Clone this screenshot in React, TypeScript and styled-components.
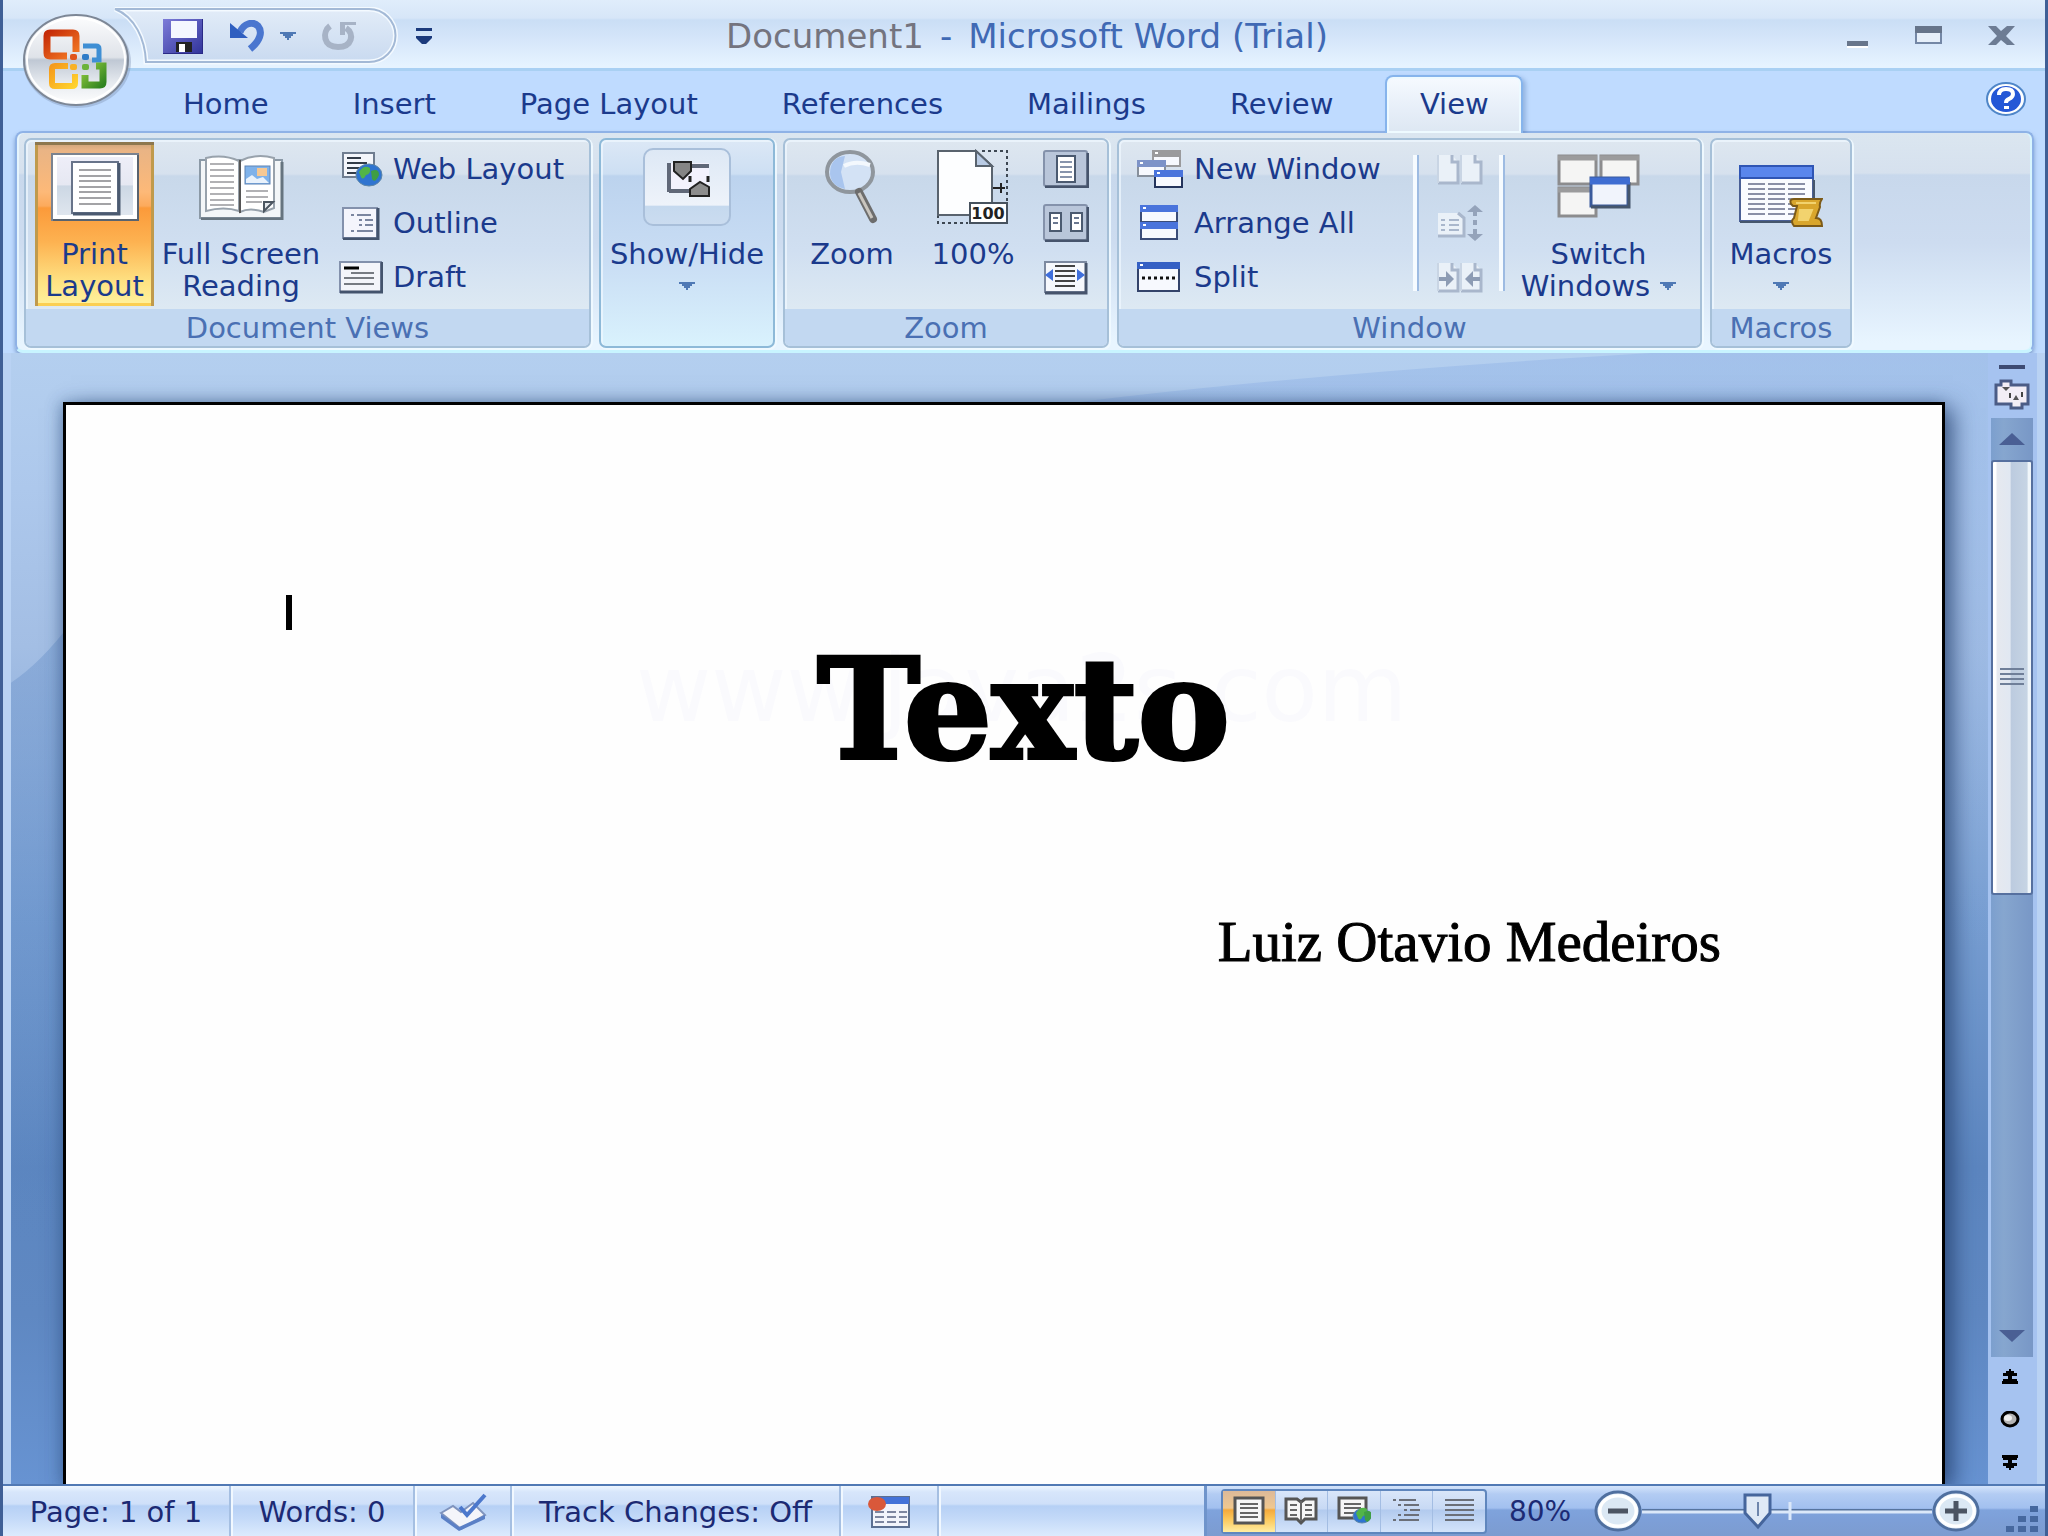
import React from "react";
import styled, { createGlobalStyle, css } from "styled-components";

const INK = "#1b3a8c";

const GlobalStyle = createGlobalStyle`
  * { box-sizing: border-box; }
  html, body { margin: 0; padding: 0; }
  body { background: #3c5a8c; }
  svg { display: block; flex: none; }
  button {
    border: 0; padding: 0; margin: 0; background: none;
    font: inherit; color: inherit; cursor: default;
  }
`;

const Window = styled.div`
  height: 100vh;
  display: flex;
  flex-direction: column;
  overflow: hidden;
  background: #bfdbff;
  border: solid #3f5f96;
  border-width: 0 3px;
  font: 29px/32px "DejaVu Sans", Verdana, sans-serif;
  color: ${INK};
`;

/* ---------- title bar ---------- */

const TitleBar = styled.header`
  position: relative;
  flex: none;
  height: 71px;
  display: grid;
  grid-template-columns: 1fr auto 1fr;
  align-items: center;
  padding: 4px 30px 0 36px;
  border-bottom: 3px solid #a9d0f3;
  background: linear-gradient(#e0edfb 0, #d7e6f8 18px, #cadef5 20px, #d6e6fa 40px, #e6f3ff 66px);
`;

const OfficeButton = styled.button`
  position: absolute;
  left: 14px;
  top: 12px;
  z-index: 2;
`;

const QuickAccess = styled.nav`
  position: relative;
  display: flex;
  align-items: center;
  height: 52px;
  margin-left: 106px;
  padding-left: 18px;
`;

const QuickShape = styled.svg`
  position: absolute;
  left: -34px;
  top: -3px;
`;

const QuickButton = styled.button<{ $gap?: number }>`
  position: relative;
  margin-right: ${(p) => p.$gap ?? 0}px;
`;

const Title = styled.h1`
  margin: 0;
  display: flex;
  gap: 16px;
  font-size: 34px;
  line-height: 40px;
  font-weight: 400;
  color: #4069b4;
  white-space: nowrap;
`;

const DocName = styled.span`
  color: #74747f;
`;

const WindowControls = styled.div`
  display: flex;
  align-items: center;
  justify-content: flex-end;
  gap: 46px;
`;

/* ---------- tabs ---------- */

const TabRow = styled.nav`
  flex: none;
  display: flex;
  align-items: flex-end;
  gap: 20px;
  height: 60px;
  padding: 0 19px 0 148px;
`;

const Tab = styled.button<{ $active?: boolean }>`
  height: 56px;
  padding: 0 30px;
  border: 2px solid transparent;
  border-bottom: 0;
  border-radius: 8px 8px 0 0;
  white-space: nowrap;
  ${(p) =>
    p.$active &&
    css`
      position: relative;
      z-index: 1;
      min-width: 138px;
      height: 58px;
      margin-bottom: -2px;
      padding-bottom: 2px;
      border-color: #86b4ec;
      background: linear-gradient(#f6faff, #e6eef8 60%, #dde7f2);
      box-shadow: inset 0 0 0 2px #eefaff, 3px 2px 4px rgba(70, 110, 170, 0.35);
      clip-path: inset(-6px -8px 0 -8px);
    `}
`;

const HelpButton = styled.button`
  margin: 0 0 14px auto;
`;

/* ---------- ribbon ---------- */

const Ribbon = styled.section`
  flex: none;
  position: relative;
  display: flex;
  gap: 8px;
  margin: 0 11px 0 12px;
  height: 222px;
  padding: 5px 7px;
  border: 2px solid #8fb2e6;
  border-bottom: 3px solid #c8f4ff;
  border-radius: 8px;
  background: linear-gradient(#dbe6f0 0, #d6e1ee 40px, #c8d8ec 42px, #cddcf0 110px, #e8f5ff 210px);
  box-shadow: inset -2px 0 0 #d8f6ff, inset 2px 0 0 #e6f5fd, 0 3px 4px rgba(80, 115, 170, 0.6);
`;

const Group = styled.section<{ $collapsed?: boolean }>`
  display: flex;
  flex-direction: column;
  height: 210px;
  border: 2px solid #a6c0d8;
  border-radius: 7px;
  background: linear-gradient(#dee7f0 0, #d6e1ee 34px, #c8d8ea 36px, #d0dff1 110px, #dde9f3 168px);
  box-shadow: 1px 1px 0 1px rgba(240, 250, 255, 0.9), inset 1px 1px 0 1px rgba(240, 248, 255, 0.7);
  ${(p) =>
    p.$collapsed &&
    css`
      border-color: #8db9d8;
      background: linear-gradient(#dce8f6 0, #cddff3 34px, #bcd3ee 36px, #c9ddf4 120px, #d9f2fd 206px);
    `}
`;

const GroupBody = styled.div<{ $left?: number; $right?: number }>`
  flex: 1;
  display: flex;
  padding: 2px ${(p) => p.$right ?? 0}px 0 ${(p) => p.$left ?? 0}px;
`;

const GroupLabel = styled.h2`
  margin: 0;
  height: 37px;
  padding-top: 3px;
  border-radius: 0 0 5px 5px;
  background: #c2d8f1;
  font-size: 29px;
  line-height: 32px;
  font-weight: 400;
  text-align: center;
  color: #4a70b3;
`;

const BigButton = styled.button<{ $width: number; $active?: boolean }>`
  width: ${(p) => p.$width}px;
  height: 164px;
  display: flex;
  flex-direction: column;
  align-items: center;
  white-space: nowrap;
  ${(p) =>
    p.$active &&
    css`
      background: linear-gradient(#c8a077 0, #e9b485 8px, #fdb978 50px, #fcaa5c 64px, #fb9a3a 66px, #fdb251 100px, #fee283 140px, #fff09a 160px);
      box-shadow: inset 0 3px 0 #8d774e, inset 3px 0 0 #c09a4c, inset -3px 0 0 #c09a4c, inset 0 -3px 0 #fbcf52;
    `}
`;

const IconSlot = styled.span`
  display: flex;
  align-items: center;
  justify-content: center;
  height: 90px;
  margin-bottom: 6px;
`;

const LabelLine = styled.span`
  display: flex;
  align-items: center;
  justify-content: center;
  gap: 10px;
  height: 32px;
`;

const SmallColumn = styled.div<{ $width: number; $indent?: number }>`
  width: ${(p) => p.$width}px;
  padding-left: ${(p) => p.$indent ?? 0}px;
  display: flex;
  flex-direction: column;
`;

const SmallButton = styled.button`
  height: 54px;
  display: flex;
  align-items: center;
  gap: 10px;
  white-space: nowrap;
`;

const Divider = styled.span`
  width: 6px;
  height: 136px;
  margin-top: 13px;
  background: linear-gradient(90deg, #f6fbff 66%, #9dbbe2 66%);
`;

/* ---------- document area ---------- */

const Workspace = styled.div`
  flex: 1;
  min-height: 0;
  position: relative;
  display: flex;
  overflow: hidden;
  border: solid #b9d2f3;
  border-width: 0 8px;
  background: linear-gradient(#b4cfef 0, #adc8ec 12%, #a3bee4 26%, #779ed2 50%, #5c86c0 72%, #5f88c2 85%, #6793d2 100%);
`;

const Backdrop = styled.svg`
  position: absolute;
  inset: 0;
`;

const Page = styled.main`
  position: relative;
  flex: 1;
  margin: 49px 43px 0 52px;
  padding: 190px 221px 0 220px;
  border: 3px solid #000;
  border-bottom: 0;
  background: #fefefe;
  box-shadow: 8px 6px 22px rgba(30, 55, 100, 0.75), -4px 0 12px rgba(60, 100, 150, 0.35);
  color: #000;
`;

const Caret = styled.div`
  width: 6px;
  height: 35px;
  background: #000;
`;

const Watermark = styled.span`
  position: absolute;
  left: 570px;
  top: 235px;
  font-size: 92px;
  line-height: 100px;
  color: #fafafd;
`;

const Heading = styled.h2`
  position: relative;
  margin: 14px 0 0;
  padding-left: 40px;
  font: 700 138px/132px "DejaVu Serif", "Liberation Serif", serif;
  text-align: center;
  -webkit-text-stroke: 4px #000;
`;

const Author = styled.p`
  margin: 136px 0 0;
  font: 57px/60px "Liberation Serif", "Times New Roman", serif;
  text-align: right;
  -webkit-text-stroke: 1px #000;
`;

const ScrollColumn = styled.aside`
  position: relative;
  flex: none;
  width: 49px;
  display: flex;
  flex-direction: column;
  align-items: center;
  padding: 12px 4px 0 3px;
  background: #a6c3f0;
`;

const SplitHandle = styled.button`
  width: 26px;
  height: 4px;
  background: #3d4b73;
`;

const RulerButton = styled.button`
  margin: 10px 0 8px;
`;

const Track = styled.div`
  flex: 1;
  width: 42px;
  display: flex;
  flex-direction: column;
  background: linear-gradient(90deg, #7c9fce, #86a6cf 30%, #7897c6);
`;

const TrackSpace = styled.div`
  flex: 1;
`;

const ArrowButton = styled.button`
  height: 42px;
  display: flex;
  align-items: center;
  justify-content: center;
`;

const Thumb = styled.div`
  height: 435px;
  display: flex;
  align-items: center;
  justify-content: center;
  border: 2px solid #56709f;
  border-radius: 3px;
  background: linear-gradient(90deg, #fff 0 3px, #e6e9ef 4px, #e1e8f2 45%, #bccbdf 48%, #c6d4e4 90%, #f0f6fa 92%);
`;

const BrowseButtons = styled.div`
  height: 127px;
  display: flex;
  flex-direction: column;
  align-items: center;
  gap: 26px;
  padding: 12px 4px 0 0;
`;

/* ---------- status bar ---------- */

const StatusBar = styled.footer`
  flex: none;
  height: 52px;
  display: flex;
  border-top: 2px solid #5179b4;
  color: #1c2a74;
`;

const StatusLeft = styled.div`
  flex: 1;
  display: flex;
  background: linear-gradient(#eef6ff 0, #d7e6fb 6px, #cfe0f9 18px, #b6d0f5 20px, #c3d9f8 32px, #dcebfd 50px);
`;

const StatusCell = styled.button<{ $width?: number }>`
  width: ${(p) => p.$width}px;
  display: flex;
  align-items: center;
  justify-content: center;
  padding-top: 2px;
  white-space: nowrap;
  border-right: 2px solid #a5bfe2;
  box-shadow: 2px 0 0 #f1f8ff;
`;

const StatusRight = styled.div`
  display: flex;
  align-items: center;
  width: 841px;
  padding-left: 14px;
  border-left: 3px solid #6f94cb;
  background: linear-gradient(#d4e4fb 0, #b3ccf3 8px, #a2c0ef 22px, #7fa3dc 24px, #7d9fd8 34px, #7c9cd0 50px);
`;

const ViewSwitch = styled.div`
  display: flex;
  width: 266px;
  height: 45px;
  border: 2px solid #5f86bd;
  border-radius: 4px;
  background: linear-gradient(#d9e6f9 0, #c7d9f4 18px, #b2caee 19px, #d5e5fb 42px);
`;

const ViewButton = styled.button<{ $active?: boolean }>`
  flex: 1;
  display: flex;
  align-items: center;
  justify-content: center;
  border-right: 1px solid #a3bde3;
  &:last-child { border-right: 0; }
  ${(p) =>
    p.$active &&
    css`
      background: linear-gradient(#dcb998 0, #f0c890 17px, #f3a93c 19px, #fbc75a 28px, #fff0a8 42px);
    `}
`;

const ZoomValue = styled.button`
  width: 64px;
  margin: 0 22px 0 21px;
  padding-top: 2px;
  font-size: 28px;
`;

const ZoomSlider = styled.label`
  position: relative;
  flex: none;
`;

const Range = styled.input`
  position: absolute;
  inset: 0;
  width: 100%;
  height: 100%;
  margin: 0;
  opacity: 0;
`;

const Grip = styled.svg`
  margin-left: 26px;
  align-self: flex-end;
`;

/* ---------- drawings ---------- */

const DownArrow = ({ color = "#4f79b5" }: { color?: string }) => (
  <svg width="16" height="9" viewBox="0 0 16 9">
    <path d="M0 0h16v2h-3v2h-2v2H9v2H7V6H5V4H3V2H0z" fill={color} />
  </svg>
);

const OfficeLogo = () => (
  <svg width="118" height="98" viewBox="0 0 118 98">
    <defs>
      <linearGradient id="orb" x1="0" y1="0" x2="0" y2="1">
        <stop offset="0" stopColor="#fdfdfe" />
        <stop offset="0.47" stopColor="#dfe3e9" />
        <stop offset="0.5" stopColor="#bfc8d4" />
        <stop offset="0.75" stopColor="#e6eaef" />
        <stop offset="1" stopColor="#ffffff" />
      </linearGradient>
      <linearGradient id="lr" x1="0" y1="0" x2="1" y2="1"><stop offset="0" stopColor="#c52b08" /><stop offset="1" stopColor="#f47a24" /></linearGradient>
      <linearGradient id="ly" x1="0" y1="0" x2="1" y2="1"><stop offset="0" stopColor="#f59a1c" /><stop offset="1" stopColor="#ffd22e" /></linearGradient>
      <linearGradient id="lg" x1="0" y1="0" x2="1" y2="1"><stop offset="0" stopColor="#8cc63c" /><stop offset="1" stopColor="#2f8420" /></linearGradient>
    </defs>
    <ellipse cx="60" cy="50" rx="54" ry="46" fill="#7f93b5" opacity="0.4" />
    <ellipse cx="59" cy="48" rx="52" ry="45" fill="url(#orb)" stroke="#7d8796" strokeWidth="2" />
    <ellipse cx="59" cy="48" rx="49" ry="42" fill="none" stroke="#fff" strokeWidth="2" />
    <path d="M50 44H33q-3 0-3-3V24q0-3 3-3h23q3 0 3 3v16" fill="none" stroke="url(#lr)" strokeWidth="7" />
    <path d="M66 34h13q3 0 3 3v11h-7" fill="none" stroke="#3f8fd4" strokeWidth="5" />
    <path d="M51 54H38q-3 0-3 3v14q0 3 3 3h17q3 0 3-3V62" fill="none" stroke="url(#ly)" strokeWidth="6" />
    <path d="M79 54h7v16q0 3-3 3H68V63" fill="none" stroke="url(#lg)" strokeWidth="7" />
    <rect x="53" y="42" width="7" height="6" rx="2" fill="#e0561c" />
    <rect x="65" y="42" width="7" height="6" rx="2" fill="#2f7cc8" />
    <rect x="53" y="52" width="7" height="6" rx="2" fill="#f8b124" />
    <rect x="65" y="52" width="7" height="6" rx="2" fill="#6cb33a" />
  </svg>
);

const SaveIcon = () => (
  <svg width="40" height="35" viewBox="0 0 40 35">
    <defs><linearGradient id="sv" x1="0" x2="1" y2="1"><stop offset="0" stopColor="#7d7cd8" /><stop offset="1" stopColor="#30339a" /></linearGradient></defs>
    <rect width="40" height="35" fill="url(#sv)" />
    <rect x="8" y="2" width="26" height="17" fill="#f4f7ff" />
    <rect x="13" y="23" width="16" height="10" fill="#222" />
    <rect x="16" y="25" width="6" height="8" fill="#fff" />
    <path d="M0 35h40V0" fill="none" stroke="#2a2a86" strokeWidth="2" />
  </svg>
);

const UndoIcon = () => (
  <svg width="36" height="32" viewBox="0 0 36 32">
    <path d="M11 12C15 3 24 1 29 6c5 6 2 15-8 23" fill="none" stroke="#4a76cf" strokeWidth="7" />
    <path d="M1 3v15h18z" fill="#2f5fc0" />
  </svg>
);

const RedoIcon = () => (
  <svg width="38" height="32" viewBox="0 0 38 32">
    <path d="M10 6C2 12 3 27 18 27c14 0 17-13 8-19" fill="none" stroke="#a7b3c6" strokeWidth="6" />
    <path d="M20 2h16v3H25v10h-5z" fill="#a7b3c6" />
  </svg>
);

const PrintLayoutIcon = () => (
  <svg width="88" height="68" viewBox="0 0 88 68">
    <defs><linearGradient id="pl" x1="0" x2="0" y1="0" y2="1"><stop offset="0" stopColor="#eeeef8" /><stop offset="0.48" stopColor="#e6e8f2" /><stop offset="0.5" stopColor="#ccd7e4" /><stop offset="1" stopColor="#dfe6ee" /></linearGradient></defs>
    <rect x="1" y="1" width="86" height="66" fill="#fff" stroke="#7b8390" strokeWidth="2" />
    <rect x="6" y="4" width="76" height="58" fill="url(#pl)" />
    <path d="M2 67h85V2" fill="none" stroke="#59636f" strokeWidth="2" />
    <rect x="21" y="9" width="46" height="51" fill="#fff" stroke="#68748a" strokeWidth="2" />
    <path d="M22 61h46V10" fill="none" stroke="#4b5a70" strokeWidth="3" />
    <path d="M28 17h32M28 23h32M28 28h32M28 34h32M28 39h32M28 45h32M28 51h32" stroke="#a3a3a6" strokeWidth="2" />
  </svg>
);

const ReadingIcon = () => (
  <svg width="86" height="66" viewBox="0 0 86 66">
    <rect x="2" y="6" width="82" height="58" fill="#f3f6f8" stroke="#8b99a6" strokeWidth="2" />
    <path d="M3 65h81V8" fill="none" stroke="#66747f" strokeWidth="3" />
    <path d="M8 4q18-4 33 3v50q-15-5-33 0z" fill="#fff" stroke="#98a2ac" strokeWidth="2" />
    <path d="M42 7q16-8 34-3v50l-10 4q-14-5-24 0z" fill="#fff" stroke="#98a2ac" strokeWidth="2" />
    <path d="M42 6v53" stroke="#555" strokeWidth="2" />
    <path d="M12 10h24M12 16h24M12 22h24M12 28h24M12 34h24M12 40h24M12 46h24M12 51h24M48 37h22M48 43h22M48 48h16" stroke="#b1b1b4" strokeWidth="2" />
    <rect x="47" y="12" width="25" height="18" fill="#7fb2ea" stroke="#5f83b4" />
    <rect x="59" y="14" width="10" height="8" fill="#f6c893" />
    <path d="M48 29v-4l6-4 5 4 6-2 6 6z" fill="#e9f2fc" />
    <path d="M66 57v-9h9z" fill="#e6eaee" stroke="#4c5660" strokeWidth="2" />
  </svg>
);

const Globe = ({ x, y, r }: { x: number; y: number; r: number }) => (
  <g>
    <ellipse cx={x} cy={y} rx={r} ry={r - 2} fill="#2f74d0" stroke="#5d86a8" />
    <path d={`M${x - r + 3} ${y - 3}q5 -8 11 -4q1 6 -4 7q-3 6 -5 2z`} fill="#52b548" />
    <path d={`M${x + 2} ${y - 4}q8 -3 8 4q-4 9 -7 4z`} fill="#3f9e44" />
  </g>
);

const WebIcon = () => (
  <svg width="44" height="36" viewBox="0 0 44 36">
    <rect x="4" y="2" width="31" height="24" fill="#f4f6fb" stroke="#6f7d90" strokeWidth="2" />
    <path d="M8 7h14M8 12h20M8 17h14M8 22h10" stroke="#333c48" strokeWidth="2" />
    <Globe x={30} y={24} r={13} />
  </svg>
);
const OutlineIcon = () => (
  <svg width="44" height="34" viewBox="0 0 44 34">
    <rect x="4" y="2" width="34" height="30" fill="#f4f5fc" stroke="#8391ac" strokeWidth="2" />
    <path d="M4 33h35V2" fill="none" stroke="#43536c" strokeWidth="3" />
    <path d="M12 9h3M18 9h14M20 14h3M26 14h8M20 19h3M26 19h8M12 25h3M18 25h16" stroke="#7b86a0" strokeWidth="2" />
  </svg>
);
const DraftIcon = () => (
  <svg width="44" height="34" viewBox="0 0 44 34">
    <rect x="1" y="2" width="41" height="30" fill="#f4f5fa" stroke="#8391ac" strokeWidth="2" />
    <path d="M1 32h42V2" fill="none" stroke="#43536c" strokeWidth="3" />
    <path d="M5 8h15" stroke="#000" strokeWidth="3" />
    <path d="M12 13h23M5 18h30M5 24h30" stroke="#777b82" strokeWidth="2" />
  </svg>
);

const ShowHideIcon = () => (
  <svg width="98" height="78" viewBox="0 0 98 78">
    <defs><linearGradient id="sh" x1="0" x2="0" y1="0" y2="1"><stop offset="0" stopColor="#dde8f5" /><stop offset="0.74" stopColor="#eef3fa" /><stop offset="0.75" stopColor="#c5d9ee" /><stop offset="1" stopColor="#cbdcf0" /></linearGradient></defs>
    <rect x="6" y="1" width="86" height="76" rx="9" fill="url(#sh)" stroke="#a9bfda" strokeWidth="2" />
    <path d="M30 15h41v28H30z" fill="#f3f2fd" />
    <path d="M31 44V15M31 43h20M53 18h18" fill="none" stroke="#606878" strokeWidth="4" />
    <path d="M36 14h17v9l-8 8-9-8z" fill="#858585" stroke="#222" strokeWidth="2" />
    <path d="M52 48h19V39l-9-5-10 7z" fill="#8d8d8d" stroke="#222" strokeWidth="2" />
    <path d="M52 28v6M70 28v6" stroke="#222" strokeWidth="3" />
  </svg>
);

const MagnifierIcon = () => (
  <svg width="56" height="76" viewBox="0 0 56 76">
    <ellipse cx="26" cy="23" rx="23" ry="20" fill="#d3e2f5" stroke="#8f969d" strokeWidth="4" />
    <path d="M6 25Q6 8 21 7l-4 16 4 17Q7 37 6 25z" fill="#a9c5ee" />
    <path d="M20 17q11-6 26-1" stroke="#f3f8fd" strokeWidth="4" fill="none" />
    <path d="M35 43l14 27" stroke="#6d6d6d" strokeWidth="8" strokeLinecap="round" />
    <path d="M35 44l13 25" stroke="#c9c5be" strokeWidth="3" />
  </svg>
);

const HundredIcon = () => (
  <svg width="74" height="76" viewBox="0 0 74 76">
    <path d="M46 2h25v52M2 66v8h30" fill="none" stroke="#3d4752" strokeWidth="2" strokeDasharray="3 3" />
    <path d="M2 2h38l16 15v49H2z" fill="#fdfeff" stroke="#59636e" strokeWidth="2" />
    <path d="M40 2v15h16z" fill="#b9cbe4" stroke="#59636e" strokeWidth="2" />
    <path d="M57 39h12M65 34v10" stroke="#222" strokeWidth="2" />
    <rect x="34" y="54" width="37" height="20" fill="#fff" stroke="#47525e" strokeWidth="2" />
    <text x="52" y="70" textAnchor="middle" fontFamily="DejaVu Sans" fontWeight="700" fontSize="16" fill="#222">100</text>
  </svg>
);

const PageFrame = ({ children }: { children: React.ReactNode }) => (
  <svg width="46" height="38" viewBox="0 0 46 38">
    <rect x="1" y="1" width="43" height="35" rx="2" fill="#b9c6da" stroke="#8492ab" strokeWidth="2" />
    <path d="M2 37h43V3" fill="none" stroke="#46546c" strokeWidth="3" />
    {children}
  </svg>
);

const PageWidthIcon = () => (
  <svg width="46" height="38" viewBox="0 0 46 38">
    <rect x="2" y="4" width="41" height="30" fill="#f6f8fc" stroke="#7c89a0" strokeWidth="2" />
    <path d="M2 35h41V5" fill="none" stroke="#46546c" strokeWidth="3" />
    <path d="M12 8h20M12 13h20M12 18h20M12 23h20M12 28h20" stroke="#444" strokeWidth="2" />
    <path d="M2 17l8-6v12zM42 17l-8-6v12z" fill="#3f6fdc" />
  </svg>
);

const MiniWindow = ({ x, y, w, h, bar, edge }: { x: number; y: number; w: number; h: number; bar: string; edge: string }) => (
  <g>
    <rect x={x + 1} y={y + 1} width={w - 2} height={h - 2} fill="#f7f9fe" stroke={edge} strokeWidth="2" />
    <rect x={x} y={y} width={w} height="7" fill={bar} />
    <rect x={x + 3} y={y + 2} width="3" height="2" fill="#fff" />
  </g>
);

const BLUE = "#4a74dc";

const NewWindowIcon = () => (
  <svg width="47" height="40" viewBox="0 0 47 40">
    <MiniWindow x={15} y={1} w={29} h={17} bar="#9a9a9c" edge="#9a9a9c" />
    <MiniWindow x={0} y={11} w={29} h={17} bar="#7d93c8" edge="#87909c" />
    <MiniWindow x={17} y={21} w={29} h={18} bar={BLUE} edge="#24345c" />
  </svg>
);
const ArrangeIcon = () => (
  <svg width="47" height="36" viewBox="0 0 47 36">
    <MiniWindow x={3} y={0} w={38} h={18} bar={BLUE} edge="#3a4c78" />
    <MiniWindow x={3} y={17} w={38} h={18} bar={BLUE} edge="#3a4c78" />
  </svg>
);
const SplitIcon = () => (
  <svg width="47" height="32" viewBox="0 0 47 32">
    <MiniWindow x={0} y={1} w={43} h={30} bar="#3560c4" edge="#33436a" />
    <path d="M5 17h34" stroke="#111" strokeWidth="3" strokeDasharray="3 3" />
  </svg>
);

const GHOST = "#a9b7cc";
const TwoPages = ({ arrows }: { arrows?: boolean }) => (
  <svg width="46" height="31" viewBox="0 0 46 31">
    {[1, 24].map((x) => (
      <g key={x}>
        <path d={`M${x} 1h14l6 7v21H${x}z`} fill="#eaf1f8" />
        <path d={`M${x} 29h20V8h-6V1`} fill="none" stroke={GHOST} strokeWidth="3" />
        <path d={`M${x} 1v28`} stroke="#c9d5e4" strokeWidth="2" />
      </g>
    ))}
    {arrows && (
      <g fill="#8d9cb4">
        <path d="M2 15h7V9l8 8-8 8v-6H2z" />
        <path d="M43 15h-7V9l-8 8 8 8v-6h7z" />
      </g>
    )}
  </svg>
);
const SyncScroll = () => (
  <svg width="46" height="38" viewBox="0 0 46 38">
    <path d="M1 9h20l6 6v17H1z" fill="#eaf1f8" />
    <path d="M1 32h26V14l-6-5" fill="none" stroke={GHOST} strokeWidth="3" />
    <path d="M4 16h4M12 16h10M4 21h4M12 21h10M4 26h4M12 26h10" stroke={GHOST} strokeWidth="2" />
    <path d="M30 8l8-7 8 7zM30 30l8 7 8-7zM36 8h4v4h-4zM36 16h4v5h-4zM36 25h4v5h-4z" fill="#94a3ba" />
  </svg>
);

const SwitchIcon = () => (
  <svg width="84" height="66" viewBox="0 0 84 66">
    {[[1, 1], [43, 1], [1, 33]].map(([x, y]) => (
      <g key={`${x}-${y}`}>
        <rect x={x + 1} y={y + 1} width="37" height="28" fill="#f5f5f4" stroke="#8c8c8e" strokeWidth="3" />
        <path d={`M${x} ${y + 3}h39`} stroke="#9b9b9c" strokeWidth="5" />
      </g>
    ))}
    <rect x="34" y="24" width="37" height="28" fill="#f1f4fc" stroke="#3a5a9c" strokeWidth="3" />
    <path d="M34 53h38V28" fill="none" stroke="#46566c" strokeWidth="3" />
    <path d="M33 27h40" stroke="#3f6dd2" strokeWidth="7" />
  </svg>
);

const MacrosIcon = () => (
  <svg width="84" height="86" viewBox="0 0 84 86">
    <rect x="1" y="23" width="73" height="54" fill="#fafbff" stroke="#4a5f95" strokeWidth="2" />
    <rect x="1" y="22" width="73" height="12" fill="#5a86ec" stroke="#2f55b4" strokeWidth="2" />
    <path d="M1 78h74V36" fill="none" stroke="#46566c" strokeWidth="2" />
    {[40, 45, 50, 55, 60, 65, 70].map((y) => (
      <path key={y} d={`M9 ${y}h17M29 ${y}h17M49 ${y}h17`} stroke="#8a8fa6" strokeWidth="2" />
    ))}
    <path d="M52 60q-2-5 3-5h28q-3 4-2 8l-4 11q6 0 6 8H55q-4-5 0-8l3-12h-4z" fill="#d9a62c" stroke="#7c5a17" strokeWidth="2" />
    <path d="M57 59h20M61 66h12l-4 10H60z" fill="#f2d36e" stroke="#f2d36e" strokeWidth="2" />
  </svg>
);

const RulerIcon = () => (
  <svg width="36" height="31" viewBox="0 0 36 31">
    <path d="M2 6h5V2h10v4h17v19h-6v4H17v-4H2z" fill="#f3eef6" stroke="#4b5c86" strokeWidth="3" />
    <path d="M8 8h8l-4 4zM19 21h6l-3-5z" fill="#555" />
    <path d="M16 14v5M28 13v5" stroke="#444" strokeWidth="2" />
  </svg>
);

const PageJump = ({ down }: { down?: boolean }) => (
  <svg width="16" height="16" viewBox="0 0 16 16">
    <g transform={down ? "rotate(180 8 8)" : undefined}>
      <path d="M7 0h2v2h3v2h3v3h-5v3h5v2h1v3H0v-3h1v-2h5V7H1V4h3V2h3z" fill="#000" />
    </g>
  </svg>
);

const ProofIcon = () => (
  <svg width="48" height="38" viewBox="0 0 48 38">
    <path d="M2 20l12-7 8 6 12-9 12 12-24 14z" fill="#f4f5fa" stroke="#7f93bd" strokeWidth="2" />
    <path d="M2 21l18 13 26-12v4L20 38 2 25z" fill="#5b80c6" />
    <path d="M21 14l7 8L46 2" fill="none" stroke="#4c78cc" strokeWidth="4" />
  </svg>
);

const MacroStatusIcon = () => (
  <svg width="44" height="34" viewBox="0 0 44 34">
    <rect x="5" y="2" width="37" height="30" fill="#f2f4fb" stroke="#5b6f92" strokeWidth="2" />
    <rect x="6" y="2" width="36" height="7" fill="#4472d8" />
    <path d="M8 17h9M20 17h9M32 17h8M8 22h9M20 22h9M32 22h8M8 27h9M20 27h9M32 27h8" stroke="#7d86a0" strokeWidth="2" />
    <ellipse cx="10" cy="9" rx="9" ry="7" fill="#d9583a" />
  </svg>
);

const ViewIcon = ({ kind }: { kind: number }) => (
  <svg width="34" height="30" viewBox="0 0 34 30">
    {kind === 0 && (<g><rect x="3" y="2" width="28" height="25" fill="#f6f6f6" stroke="#555" strokeWidth="3" /><path d="M8 8h18M8 12h18M8 17h18M8 21h18" stroke="#666" strokeWidth="2" /></g>)}
    {kind === 1 && (<g><path d="M2 3h11l4 3 4-3h11v20H21l-4 4-4-4H2z" fill="#f6f6f6" stroke="#555" strokeWidth="3" /><path d="M17 5v20M6 9h7M6 14h7M6 19h7M21 9h7M21 14h7M21 19h7" stroke="#666" strokeWidth="2" /></g>)}
    {kind === 2 && (<g><rect x="2" y="2" width="27" height="20" fill="#f6f6f6" stroke="#555" strokeWidth="3" /><path d="M7 8h17M7 12h17M7 17h17" stroke="#666" strokeWidth="2" /><Globe x={25} y={20} r={9} /></g>)}
    {kind === 3 && (<path d="M3 4h3M9 4h17M8 9h3M14 9h15M14 14h3M20 14h10M8 19h3M14 19h15M3 24h3M9 24h20" stroke="#6b6f78" strokeWidth="2" />)}
    {kind === 4 && (<path d="M3 4h29M3 9h29M3 14h29M3 19h29M3 24h29" stroke="#6b6f78" strokeWidth="2" />)}
  </svg>
);

const RoundButton = ({ plus }: { plus?: boolean }) => (
  <svg width="48" height="42" viewBox="0 0 48 42">
    <ellipse cx="24" cy="21" rx="22" ry="19" fill="#f0f6fc" stroke="#4f6f9f" strokeWidth="3" />
    <ellipse cx="24" cy="21" rx="18" ry="15" fill="#dbe8f4" stroke="#fff" strokeWidth="3" />
    <path d={plus ? "M13 21h22M24 11v20" : "M14 21h20"} stroke="#4c5563" strokeWidth="5" />
  </svg>
);

/* ---------- screen ---------- */

const viewNames = ["Print Layout", "Full Screen Reading", "Web Layout", "Outline", "Draft"];
const tabs = ["Home", "Insert", "Page Layout", "References", "Mailings", "Review", "View"];

export default function App() {
  return (
    <>
      <GlobalStyle />
      <Window>
        <TitleBar>
          <OfficeButton aria-label="Office Button"><OfficeLogo /></OfficeButton>
          <QuickAccess aria-label="Quick Access Toolbar">
            <QuickShape width="290" height="58" viewBox="0 0 290 58">
              <defs><linearGradient id="qa" x1="0" x2="0" y1="0" y2="1"><stop offset="0" stopColor="#e2ecf8" /><stop offset="1" stopColor="#c9daf0" /></linearGradient></defs>
              <path d="M4 2H258a26 26 0 0 1 0 53H35C34 32 24 10 4 2z" fill="url(#qa)" stroke="#f4faff" strokeWidth="5" />
              <path d="M4 2H258a26 26 0 0 1 0 53H35C34 32 24 10 4 2z" fill="none" stroke="#a3b9d6" strokeWidth="2" />
            </QuickShape>
            <QuickButton aria-label="Save" $gap={26}><SaveIcon /></QuickButton>
            <QuickButton aria-label="Undo" $gap={15}><UndoIcon /></QuickButton>
            <QuickButton aria-label="Undo history" $gap={24}><DownArrow /></QuickButton>
            <QuickButton aria-label="Repeat" $gap={58}><RedoIcon /></QuickButton>
            <QuickButton aria-label="Customize Quick Access Toolbar">
              <svg width="16" height="16" viewBox="0 0 16 16"><path d="M0 0h16v3H0zM0 8h16v2l-6 6H6L0 10z" fill="#1b3a7c" /></svg>
            </QuickButton>
          </QuickAccess>
          <Title><DocName>Document1</DocName><span>-</span><span>Microsoft Word (Trial)</span></Title>
          <WindowControls>
            <button aria-label="Minimize"><svg width="22" height="26" viewBox="0 0 22 26"><path d="M0 18h21v5H0z" fill="#68768c" /><path d="M0 23h21v2H0z" fill="#fff" /></svg></button>
            <button aria-label="Restore"><svg width="27" height="20" viewBox="0 0 27 20"><path d="M1 1h25v16H1z" fill="#e6effa" stroke="#7487a6" strokeWidth="2" /><path d="M0 0h27v7H0z" fill="#66748a" /></svg></button>
            <button aria-label="Close"><svg width="27" height="22" viewBox="0 0 27 22"><path d="M0 1h8l5 5 6-5h8l-9 10 9 9h-8l-6-5-5 5H0l9-9z" fill="#6d7c94" /></svg></button>
          </WindowControls>
        </TitleBar>

        <TabRow>
          {tabs.map((t) => <Tab key={t} $active={t === "View"}>{t}</Tab>)}
          <HelpButton aria-label="Help">
            <svg width="40" height="35" viewBox="0 0 40 35">
              <ellipse cx="20" cy="17" rx="19" ry="16" fill="#fff" stroke="#4f86c8" strokeWidth="2" />
              <ellipse cx="20" cy="17" rx="15" ry="13" fill="#2457d6" />
              <path d="M13 13q0-6 7-6t7 5q0 3-4 5-3 1-3 4" fill="none" stroke="#fff" strokeWidth="4" />
              <path d="M18 24h5v3h-5z" fill="#fff" />
            </svg>
          </HelpButton>
        </TabRow>

        <Ribbon>
          <Group>
            <GroupBody $left={9} $right={9}>
              <BigButton $width={119} $active>
                <IconSlot><PrintLayoutIcon /></IconSlot>
                <LabelLine>Print</LabelLine><LabelLine>Layout</LabelLine>
              </BigButton>
              <BigButton $width={174}>
                <IconSlot><ReadingIcon /></IconSlot>
                <LabelLine>Full Screen</LabelLine><LabelLine>Reading</LabelLine>
              </BigButton>
              <SmallColumn $width={252} $indent={11}>
                <SmallButton><WebIcon />Web Layout</SmallButton>
                <SmallButton><OutlineIcon />Outline</SmallButton>
                <SmallButton><DraftIcon />Draft</SmallButton>
              </SmallColumn>
            </GroupBody>
            <GroupLabel>Document Views</GroupLabel>
          </Group>

          <Group $collapsed>
            <GroupBody>
              <BigButton $width={172}>
                <IconSlot><ShowHideIcon /></IconSlot>
                <LabelLine>Show/Hide</LabelLine><LabelLine><DownArrow /></LabelLine>
              </BigButton>
            </GroupBody>
          </Group>

          <Group>
            <GroupBody $left={8} $right={8}>
              <BigButton $width={118}><IconSlot><MagnifierIcon /></IconSlot><LabelLine>Zoom</LabelLine></BigButton>
              <BigButton $width={124}><IconSlot><HundredIcon /></IconSlot><LabelLine>100%</LabelLine></BigButton>
              <SmallColumn $width={64} $indent={8}>
                <SmallButton aria-label="One Page"><PageFrame><rect x="14" y="6" width="18" height="26" fill="#fff" stroke="#4b5a70" strokeWidth="2" /><path d="M17 12h12M17 17h12M17 22h12M17 27h12" stroke="#8794ac" strokeWidth="2" /></PageFrame></SmallButton>
                <SmallButton aria-label="Two Pages"><PageFrame><path d="M7 9h11v18H7zM28 9h11v18H28z" fill="#fff" stroke="#4b5a70" strokeWidth="2" /><path d="M10 14h5M10 19h5M31 14h5M31 19h5" stroke="#6b7890" strokeWidth="2" /></PageFrame></SmallButton>
                <SmallButton aria-label="Page Width"><PageWidthIcon /></SmallButton>
              </SmallColumn>
            </GroupBody>
            <GroupLabel>Zoom</GroupLabel>
          </Group>

          <Group>
            <GroupBody $left={18} $right={8}>
              <SmallColumn $width={276}>
                <SmallButton><NewWindowIcon />New Window</SmallButton>
                <SmallButton><ArrangeIcon />Arrange All</SmallButton>
                <SmallButton><SplitIcon />Split</SmallButton>
              </SmallColumn>
              <Divider />
              <SmallColumn $width={80} $indent={18}>
                <SmallButton disabled aria-label="View Side by Side"><TwoPages /></SmallButton>
                <SmallButton disabled aria-label="Synchronous Scrolling"><SyncScroll /></SmallButton>
                <SmallButton disabled aria-label="Reset Window Position"><TwoPages arrows /></SmallButton>
              </SmallColumn>
              <Divider />
              <BigButton $width={187}>
                <IconSlot><SwitchIcon /></IconSlot>
                <LabelLine>Switch</LabelLine><LabelLine>Windows<DownArrow /></LabelLine>
              </BigButton>
            </GroupBody>
            <GroupLabel>Window</GroupLabel>
          </Group>

          <Group>
            <GroupBody>
              <BigButton $width={138}>
                <IconSlot><MacrosIcon /></IconSlot>
                <LabelLine>Macros</LabelLine><LabelLine><DownArrow /></LabelLine>
              </BigButton>
            </GroupBody>
            <GroupLabel>Macros</GroupLabel>
          </Group>
        </Ribbon>

        <Workspace>
          <Backdrop width="100%" height="100%" viewBox="0 0 2026 1132" preserveAspectRatio="none">
            <defs>
              <linearGradient id="fadeA" x1="0" x2="0" y1="0" y2="1"><stop offset="0" stopColor="#8fb2e6" stopOpacity="0.45" /><stop offset="1" stopColor="#8fb2e6" stopOpacity="0" /></linearGradient>
              <linearGradient id="fadeB" x1="0" x2="0" y1="0" y2="1"><stop offset="0" stopColor="#4f7dbd" stopOpacity="0.3" /><stop offset="1" stopColor="#4f7dbd" stopOpacity="0" /></linearGradient>
            </defs>
            <path d="M1060 50Q1300 20 1640 0H2026V600H1060z" fill="url(#fadeA)" />
            <path d="M0 330Q30 310 60 270V900H0z" fill="url(#fadeB)" />
          </Backdrop>
          <Page>
            <Watermark>www.java2s.com</Watermark>
            <Caret />
            <Heading>Texto</Heading>
            <Author>Luiz Otavio Medeiros</Author>
          </Page>
          <ScrollColumn>
            <SplitHandle aria-label="Split" />
            <RulerButton aria-label="View Ruler"><RulerIcon /></RulerButton>
            <Track>
              <ArrowButton aria-label="Scroll up"><svg width="28" height="12" viewBox="0 0 28 12"><path d="M14 0l13 12H1z" fill="#4a5f94" /></svg></ArrowButton>
              <Thumb><svg width="24" height="19" viewBox="0 0 24 19"><path d="M0 1h24M0 6h24M0 11h24M0 16h24" stroke="#6f7f99" strokeWidth="2" /></svg></Thumb>
              <TrackSpace />
              <ArrowButton aria-label="Scroll down"><svg width="28" height="12" viewBox="0 0 28 12"><path d="M14 12l13-12H1z" fill="#4a5f94" /></svg></ArrowButton>
            </Track>
            <BrowseButtons>
              <button aria-label="Previous Page"><PageJump /></button>
              <button aria-label="Select Browse Object"><svg width="20" height="17" viewBox="0 0 20 17"><ellipse cx="10" cy="8" rx="8" ry="7" fill="#b4b4b4" stroke="#000" strokeWidth="3" /><ellipse cx="8" cy="7" rx="4" ry="3" fill="#eee" /></svg></button>
              <button aria-label="Next Page"><PageJump down /></button>
            </BrowseButtons>
          </ScrollColumn>
        </Workspace>

        <StatusBar>
          <StatusLeft>
            <StatusCell $width={228}>Page: 1 of 1</StatusCell>
            <StatusCell $width={184}>Words: 0</StatusCell>
            <StatusCell $width={97} aria-label="Proofing"><ProofIcon /></StatusCell>
            <StatusCell $width={329}>Track Changes: Off</StatusCell>
            <StatusCell $width={98} aria-label="Macro recording"><MacroStatusIcon /></StatusCell>
          </StatusLeft>
          <StatusRight>
            <ViewSwitch>
              {viewNames.map((n, i) => <ViewButton key={n} $active={i === 0} aria-label={n}><ViewIcon kind={i} /></ViewButton>)}
            </ViewSwitch>
            <ZoomValue>80%</ZoomValue>
            <button aria-label="Zoom out"><RoundButton /></button>
            <ZoomSlider>
              <svg width="290" height="40" viewBox="0 0 290 40">
                <path d="M0 19h290" stroke="#56749f" strokeWidth="2" />
                <path d="M0 21h290M148 11v18" stroke="#dbe8f9" strokeWidth="3" />
                <path d="M103 4h25v18L116 36 103 22z" fill="#dfe9f6" stroke="#45659c" strokeWidth="3" />
                <path d="M116 11v14" stroke="#6f86ac" strokeWidth="2" />
              </svg>
              <Range type="range" min={10} max={500} defaultValue={80} aria-label="Zoom level" />
            </ZoomSlider>
            <button aria-label="Zoom in"><RoundButton plus /></button>
            <Grip width="34" height="30" viewBox="0 0 34 30">
              <path d="M24 0h8v6h-8zM12 10h8v6h-8zM24 10h8v6h-8zM0 20h8v6H0zM12 20h8v6h-8zM24 20h8v6h-8z" fill="#46689f" />
            </Grip>
          </StatusRight>
        </StatusBar>
      </Window>
    </>
  );
}
